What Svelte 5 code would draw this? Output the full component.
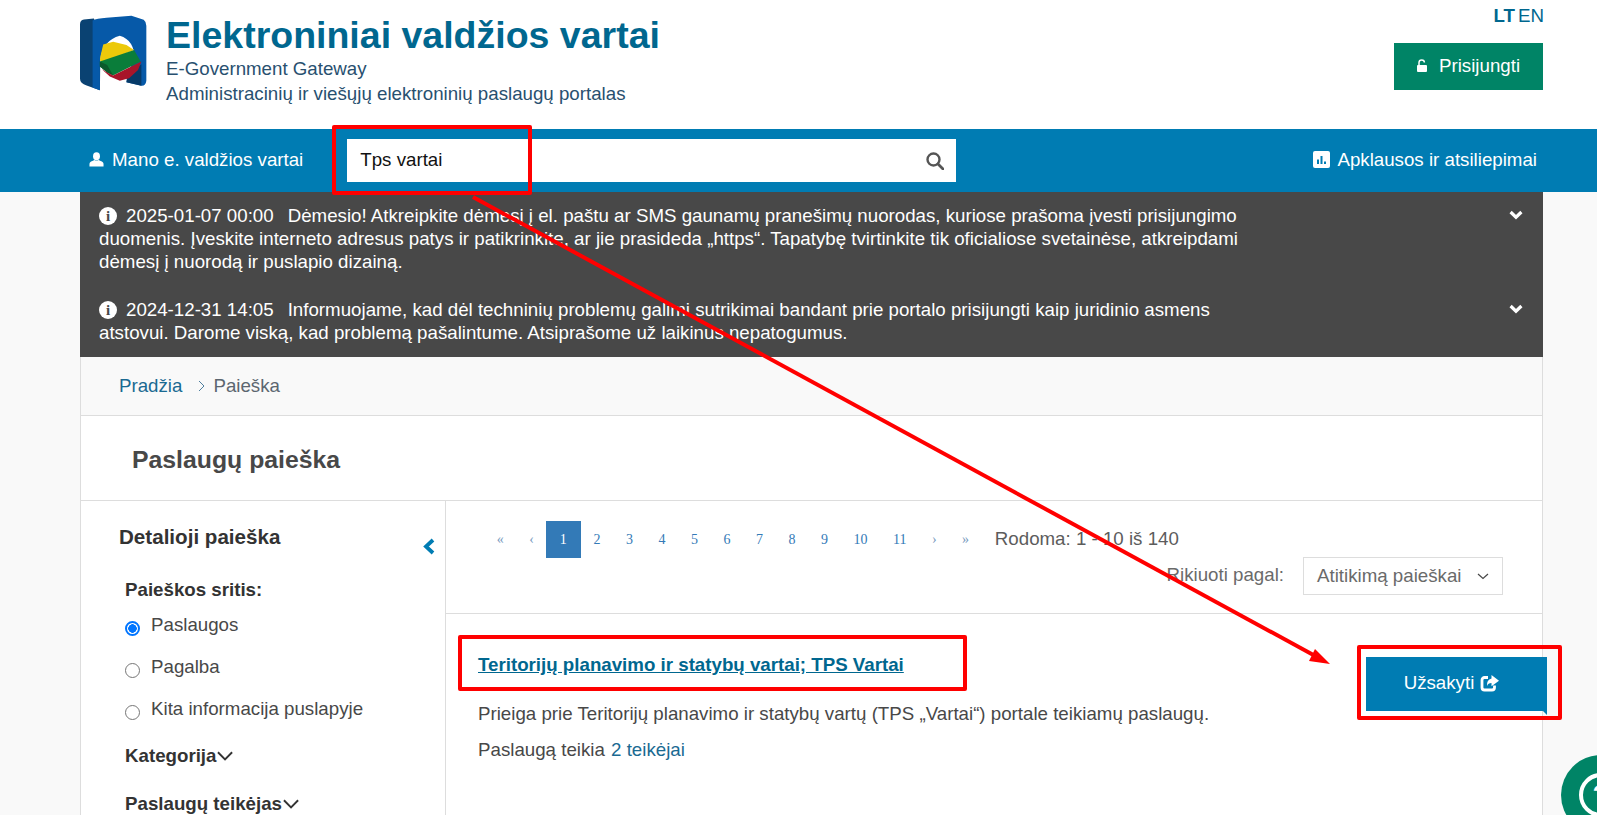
<script>
  const pages = ['2','3','4','5','6','7','8','9','10','11'];
</script>

<div class="page">
  <header class="top">
    <div class="brand">
      <svg class="logo" viewBox="30 30 202 228" width="67" height="76" aria-hidden="true">
        <path d="M30 58 Q30 45 42 43 L72 40 L92 100 L90 256 L50 242 Q30 236 30 222Z" fill="#0a4272"/>
        <path d="M68 46 Q80 40 110 38 L185 32 L222 44 Q230 50 230 62 L230 228 Q228 244 215 243 L170 232 L178 195 L195 165 Q195 105 150 92 Q100 105 90 165 L90 256 L68 248Z" fill="#0659a8"/>
        <path d="M170 232 L172 213 L215 178 L215 243Z" fill="#063a68"/>
        <path d="M92 152 L100 118 L130 110 L170 120 L193 135 L100 173 L90 166Z" fill="#ecc90a"/>
        <path d="M90 170 L193 135 L213 170 L130 212 L112 203 L90 185Z" fill="#0a7d3a"/>
        <path d="M90 170 L112 180 L130 212 L112 203 L90 185Z" fill="#0b5a2c"/>
        <path d="M95 192 L112 203 L130 212 L215 170 L205 195 L178 220 L150 228 L120 215Z" fill="#a8152a"/>
      </svg>
      <div class="brand-text">
        <h1>Elektroniniai valdžios vartai</h1>
        <p>E-Government Gateway</p>
        <p>Administracinių ir viešųjų elektroninių paslaugų portalas</p>
      </div>
    </div>
    <div class="top-right">
      <div class="lang"><b>LT</b><span>EN</span></div>
      <a class="login">
        <svg viewBox="0 0 10 13" width="10" height="13" aria-hidden="true"><path d="M2 6V3.600a2.700 2.700 0 0 1 5.400 0" fill="none" stroke="#fff" stroke-width="1.500"/><rect y="6" width="10" height="7" rx="1" fill="#fff"/></svg>
        Prisijungti
      </a>
    </div>
  </header>

  <nav class="bar">
    <a class="nav-link user">
      <svg viewBox="0 0 16 16" width="15" height="15" aria-hidden="true"><ellipse cx="8" cy="4.600" rx="3.700" ry="4.400" fill="#fff"/><path d="M0.500 15.500 V13 Q0.500 10.400 3.600 9.600 L5.800 8.600 Q8 10 10.200 8.600 L12.400 9.600 Q15.500 10.400 15.500 13 V15.500Z" fill="#fff"/></svg>
      Mano e. valdžios vartai
    </a>
    <div class="search">
      <span>Tps vartai</span>
      <svg viewBox="0 0 18 18" width="18" height="18" aria-hidden="true"><circle cx="7.500" cy="7.500" r="6" fill="none" stroke="#555" stroke-width="2.400"/><path d="M12 12 L17 17" stroke="#555" stroke-width="2.800" stroke-linecap="round"/></svg>
    </div>
    <a class="nav-link survey">
      <svg viewBox="0 0 17 17" width="17" height="17" aria-hidden="true"><rect width="17" height="17" rx="2" fill="#fff"/><path d="M4 8.500h2V13H4zM7.500 5h2v8h-2zM11 10.500h2V13h-2z" fill="#007cb3"/></svg>
      Apklausos ir atsiliepimai
    </a>
  </nav>

  <div class="content">
    <section class="notices">
      <div class="notice">
        <p><i class="info">i</i><span class="date">2025-01-07 00:00</span>Dėmesio! Atkreipkite dėmesį į el. paštu ar SMS gaunamų pranešimų nuorodas, kuriose prašoma įvesti prisijungimo duomenis. Įveskite interneto adresus patys ir patikrinkite, ar jie prasideda „https“. Tapatybę tvirtinkite tik oficialiose svetainėse, atkreipdami dėmesį į nuorodą ir puslapio dizainą.</p>
        <svg class="chev" viewBox="0 0 14 10" width="14" height="10" aria-hidden="true"><path d="M1.600 2 L7 7.200 L12.400 2" fill="none" stroke="#fff" stroke-width="3.200"/></svg>
      </div>
      <div class="notice">
        <p><i class="info">i</i><span class="date">2024-12-31 14:05</span>Informuojame, kad dėl techninių problemų galimi sutrikimai bandant prie portalo prisijungti kaip juridinio asmens atstovui. Darome viską, kad problemą pašalintume. Atsiprašome už laikinus nepatogumus.</p>
        <svg class="chev" viewBox="0 0 14 10" width="14" height="10" aria-hidden="true"><path d="M1.600 2 L7 7.200 L12.400 2" fill="none" stroke="#fff" stroke-width="3.200"/></svg>
      </div>
    </section>

    <div class="crumbs">
      <a>Pradžia</a>
      <svg viewBox="0 0 7 12" width="7" height="12" aria-hidden="true"><path d="M1 1 L6 6 L1 11" fill="none" stroke="#4f7f9f" stroke-width="1"/></svg>
      <span>Paieška</span>
    </div>

    <h2 class="title">Paslaugų paieška</h2>

    <div class="columns">
      <aside class="side">
        <div class="side-head">
          <h3>Detalioji paieška</h3>
          <svg viewBox="0 0 12 16" width="12" height="17" aria-hidden="true"><path d="M10 1.500 L3 8 L10 14.500" fill="none" stroke="#007cb3" stroke-width="3.800"/></svg>
        </div>
        <h4 class="area">Paieškos sritis:</h4>
        <label class="radio"><i class="dot on"></i>Paslaugos</label>
        <label class="radio"><i class="dot"></i>Pagalba</label>
        <label class="radio"><i class="dot"></i>Kita informacija puslapyje</label>
        <h4 class="filter">Kategorija<svg viewBox="0 0 18 10" width="17" height="10" aria-hidden="true"><path d="M1 1 L8.500 8.500 L16 1" fill="none" stroke="#333" stroke-width="2"/></svg></h4>
        <h4 class="filter">Paslaugų teikėjas<svg viewBox="0 0 18 10" width="17" height="10" aria-hidden="true"><path d="M1 1 L8.500 8.500 L16 1" fill="none" stroke="#333" stroke-width="2"/></svg></h4>
      </aside>

      <main class="main">
        <div class="tools">
          <div class="pager-row">
            <ul class="pager">
              <li class="arrow">«</li>
              <li class="arrow">‹</li>
              <li class="current">1</li>
              {#each pages as p}<li>{p}</li>{/each}
              <li class="arrow">›</li>
              <li class="arrow">»</li>
            </ul>
            <span class="count">Rodoma: 1 - 10 iš 140</span>
          </div>
          <div class="sort">
            <span>Rikiuoti pagal:</span>
            <div class="select">Atitikimą paieškai
              <svg viewBox="0 0 12 7" width="12" height="7" aria-hidden="true"><path d="M1 1 L6 5.500 L11 1" fill="none" stroke="#484848" stroke-width="1.200"/></svg>
            </div>
          </div>
        </div>

        <article class="result">
          <div class="result-body">
            <a class="result-title">Teritorijų planavimo ir statybų vartai; TPS Vartai</a>
            <p class="desc">Prieiga prie Teritorijų planavimo ir statybų vartų (TPS „Vartai“) portale teikiamų paslaugų.</p>
            <p class="prov">Paslaugą teikia <a>2 teikėjai</a></p>
          </div>
          <a class="order">Užsakyti
            <svg viewBox="0 0 19 17" width="19" height="17" aria-hidden="true"><path d="M8 2.500H4.500A2.500 2.500 0 0 0 2 5V12.500A2.500 2.500 0 0 0 4.500 15H12A2.500 2.500 0 0 0 14.500 12.500V10.500" fill="none" stroke="#fff" stroke-width="2.800"/><path d="M11.500 0 L19 5.800 L11.500 11.200 V8 Q8 8 7 11 Q6.500 5 11.500 3.600Z" fill="#fff"/></svg>
          </a>
        </article>
      </main>
    </div>
  </div>

  <div class="help"><span>?</span></div>

  <svg class="marks" viewBox="0 0 1597 815" width="1597" height="815" aria-hidden="true">
    <g fill="none" stroke="#ff0000" stroke-width="4" stroke-linejoin="round">
      <rect x="334" y="127" width="196" height="66"/>
      <rect x="460" y="637" width="505" height="52"/>
      <rect x="1359" y="647" width="201" height="71"/>
    </g>
    <path d="M473 197 L1318 657.500" stroke="#ff0000" stroke-width="4"/>
    <path d="M1330 664 L1315 649 L1309 661Z" fill="#ff0000"/>
  </svg>
</div>

<style>
  :global(body) { margin: 0; background: #f9f9f9; }
  .page { position: relative; height: 815px; overflow: hidden; font-family: "Liberation Sans", Arial, sans-serif; color: #484848; font-size: 18.72px; }
  a { cursor: pointer; }
  p, h1, h2, h3, h4, ul { margin: 0; padding: 0; }

  .top { height: 129px; background: #fff; display: flex; justify-content: space-between; padding: 0 54px 0 80px; box-sizing: border-box; }
  .brand { display: flex; gap: 19px; padding-top: 15px; }
  .logo { flex: none; }
  .brand-text h1 { font-size: 37.5px; line-height: 40px; font-weight: 700; color: #00678f; }
  .brand-text p { font-size: 18.72px; line-height: 25px; color: #28506f; }
  .brand-text h1 + p { margin-top: 1px; }
  .top-right { display: flex; flex-direction: column; align-items: flex-end; padding-top: 6px; }
  .lang { font-size: 18.72px; line-height: 20px; color: #00678f; display: flex; gap: 3px; margin-right: -1px; }
  .login { margin-top: 17px; width: 149px; height: 47px; box-sizing: border-box; padding-bottom: 2px; background: #008466; color: #fff; display: flex; align-items: center; justify-content: center; gap: 12px; }

  .bar { height: 63px; background: #007cb3; display: flex; align-items: center; color: #fff; }
  .nav-link { color: #fff; display: flex; align-items: center; padding-bottom: 2px; }
  .user { margin-left: 89px; gap: 8px; }
  .search { margin-left: 44px; width: 609px; height: 43px; background: #fff; box-sizing: border-box; padding: 0 12px 0 13px; display: flex; align-items: center; justify-content: space-between; color: #111; }
  .search span { padding-bottom: 2px; }
  .survey { margin-left: auto; margin-right: 60px; gap: 7px; }

  .content { margin: 0 54px 0 80px; }
  .notices { background: #484848; color: #fff; height: 165px; padding-top: 12px; box-sizing: border-box; }
  .notice { position: relative; padding: 0 293px 0 19px; height: 94px; }
  .notice p { line-height: 23px; }
  .info { display: inline-block; width: 18px; height: 18px; border-radius: 50%; background: #fff; color: #484848; font: 700 15px/18px "Liberation Serif", serif; text-align: center; margin-right: 9px; vertical-align: 1px; }
  .date { margin-right: 14px; }
  .chev { position: absolute; right: 20px; top: 6px; }

  .crumbs { height: 59px; box-sizing: border-box; border: 1px solid #ddd; border-top: 0; display: flex; align-items: center; padding-left: 38px; background: #f9f9f9; color: #5c6670; }
  .crumbs a { color: #1a6a92; margin-right: 16px; }
  .crumbs svg { margin-right: 8px; }
  .title { height: 85px; box-sizing: border-box; background: #fff; border-left: 1px solid #ddd; border-right: 1px solid #ddd; border-bottom: 1px solid #ddd; padding: 30px 0 0 51px; font-size: 24.8px; line-height: 28px; font-weight: 700; color: #484848; }

  .columns { display: flex; background: #fff; border-left: 1px solid #ddd; border-right: 1px solid #ddd; height: 400px; }
  .side { width: 365px; flex: none; box-sizing: border-box; border-right: 1px solid #ddd; padding: 24px 0 0 38px; color: #333; }
  .side-head { display: flex; justify-content: space-between; padding-right: 10px; }
  .side-head h3 { font-size: 20.6px; line-height: 24px; font-weight: 700; }
  .side-head svg { margin-top: 13px; }
  .area { font-size: 18.72px; line-height: 22px; margin: 24px 0 0 6px; }
  .radio { display: flex; margin: 13px 0 0 6px; height: 30px; line-height: 22px; color: #484848; gap: 11px; }
  .radio + .radio { margin-top: 12px; }
  .dot { width: 15px; height: 15px; border-radius: 50%; border: 1px solid #767676; box-sizing: border-box; margin-top: 7px; flex: none; background: #fff; }
  .dot.on { border: 2px solid #0075ff; background: radial-gradient(circle, #0075ff 4px, #fff 4.5px); }
  .filter { font-size: 18.72px; line-height: 22px; margin: 17px 0 0 6px; display: flex; align-items: center; gap: 1px; }
  .filter + .filter { margin-top: 26px; }

  .main { flex: 1; min-width: 0; }
  .tools { height: 113px; border-bottom: 1px solid #ddd; box-sizing: border-box; position: relative; }
  .pager-row { display: flex; align-items: center; padding: 20px 0 0 38px; }
  .pager { list-style: none; display: flex; font: 14px/37px "Liberation Serif", serif; color: #337ab7; }
  .pager li { padding: 0 12.75px; height: 37px; text-align: center; }
  .pager .arrow { color: #7a9cc0; }
  .pager .current { background: #337ab7; color: #fff; padding: 0 14px; margin-left: -1px; }
  .count { margin-left: 13px; padding-bottom: 2px; color: #5c5c5c; }
  .sort { position: absolute; top: 56px; right: 39px; display: flex; align-items: center; gap: 19px; color: #6a6a6a; }
  .sort > span { padding-bottom: 2px; }
  .select { width: 200px; height: 38px; box-sizing: border-box; border: 1px solid #ddd; display: flex; align-items: center; justify-content: space-between; padding: 0 13px; color: #6a6a6a; }

  .result { display: flex; justify-content: space-between; padding: 40px 0 0 32px; }
  .result-title { font-weight: 700; color: #00678f; text-decoration: underline; line-height: 22px; display: block; }
  .desc { margin-top: 27px; line-height: 22px; color: #484848; }
  .prov { margin-top: 14px; line-height: 22px; color: #484848; }
  .prov a { color: #1a6a92; margin-left: 1px; }
  .order { width: 181px; height: 54px; box-sizing: border-box; padding: 0 10px 2px 0; margin: 3px -5px 0 0; background: #007cb3; color: #fff; display: flex; align-items: center; justify-content: center; gap: 6px; position: relative; z-index: 1; }
  .order::after { content: ""; position: absolute; right: 0; top: 100%; border-style: solid; border-width: 0 4px 4px 0; border-color: transparent #007cb3 transparent transparent; }

  .help { position: absolute; left: 1561px; top: 755px; width: 80px; height: 80px; border-radius: 50%; background: #008466; display: flex; align-items: center; justify-content: center; }
  .help span { width: 44px; height: 44px; box-sizing: border-box; border: 4px solid #fff; border-radius: 50%; color: #fff; font: 700 28px/36px "Liberation Sans", sans-serif; text-align: center; }
  .marks { position: absolute; left: 0; top: 0; pointer-events: none; }
</style>
